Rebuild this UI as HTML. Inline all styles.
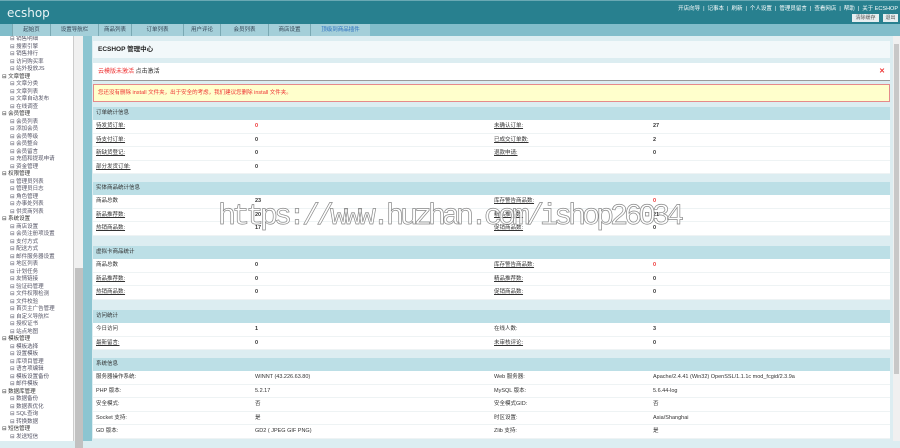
<!DOCTYPE html>
<html><head><meta charset="utf-8"><style>
*{margin:0;padding:0;box-sizing:border-box}
body{width:900px;height:441px;overflow:hidden;position:relative;background:#dcedf1;font-family:"Liberation Sans","Noto Sans CJK SC",sans-serif;font-size:6px;color:#333}
.top{position:absolute;left:0;top:0;width:900px;height:24px;background:#28808f;border-top:1px solid #6aa9b4}
.logo{position:absolute;left:7px;top:5px;color:#e8f4f6;font-size:12px;font-weight:normal;letter-spacing:0px;font-family:"DejaVu Sans",sans-serif}
.links{position:absolute;right:2px;top:3px;color:#fff;font-size:5.5px;white-space:nowrap}
.links span{margin:0 3px}
.btn{position:absolute;top:13px;height:8px;background:#e6eef0;color:#555;font-size:5px;line-height:8px;text-align:center}
.tabs{position:absolute;left:0;top:24px;width:900px;height:12px;background:#81bdca}
.tab{position:absolute;top:0;height:12px;background:#a4cfd9;border-left:1px solid #7aa9b3;font-size:5.5px;line-height:12px;text-align:center;color:#345}
.side{position:absolute;left:0;top:36px;width:73px;height:405px;background:#fff;overflow:hidden}
.side div{height:7.5px;line-height:7.5px;font-size:5.5px;white-space:nowrap;color:#556}
.side .g{padding-left:2px;color:#333}
.side .i{padding-left:10px}
.sb{position:absolute;left:73px;top:36px;width:10px;height:405px;background:#f0f0f0;border-left:1px solid #ccc}
.sb .th{position:absolute;left:1px;top:232px;width:8px;height:180px;background:#c1c1c1}
.div{position:absolute;left:83px;top:36px;width:9px;height:405px;background:#8cc5d1}
.rsb{position:absolute;left:893px;top:36px;width:7px;height:405px;background:#f0f0f0}
.rsb .th{position:absolute;left:1px;top:8px;width:5px;height:330px;background:#c8c8c8}
.panel{position:absolute;left:93px;width:797px}
.hd{background:#bcdfe6;height:13px;line-height:13px;padding-left:3px;font-size:5.5px;color:#333}
.row{background:#fff;height:13.6px;line-height:13.6px;position:relative;border-bottom:1px solid #eef3f4}
.row span{position:absolute;top:0;font-size:5.5px}
.c1{left:3px}.c2{left:162px;font-weight:bold}.c3{left:401px}.c4{left:560px;font-weight:bold}
.u{text-decoration:underline}
.r{color:#e33}
.n{font-weight:normal!important}
.wm{position:absolute;left:218px;top:200px;font-family:"Liberation Mono",monospace;font-size:30px;color:rgba(255,255,255,0.85);-webkit-text-stroke:0.7px #888;white-space:nowrap;letter-spacing:-4px}
</style></head><body>
<div class="top">
<div class="logo">ecshop</div>
<div class="links">开店向导<span>|</span>记事本<span>|</span>刷新<span>|</span>个人设置<span>|</span>管理员留言<span>|</span>查看网店<span>|</span>帮助<span>|</span>关于 ECSHOP</div>
<div class="btn" style="left:852px;width:27px">清除缓存</div>
<div class="btn" style="left:883px;width:15px">退出</div>
</div>
<div class="tabs">
<div class="tab" style="left:12px;width:38px">起始页</div>
<div class="tab" style="left:50px;width:48px">设置导航栏</div>
<div class="tab" style="left:98px;width:33px">商品列表</div>
<div class="tab" style="left:131px;width:52px">订单列表</div>
<div class="tab" style="left:183px;width:37px">用户评论</div>
<div class="tab" style="left:220px;width:48px">会员列表</div>
<div class="tab" style="left:268px;width:42px">商店设置</div>
<div class="tab" style="left:310px;width:60px;color:#2a6fc0">顶级到商品插件</div>
</div>
<div class="side">
<div class="i">⊟ 销售明细</div><div class="i">⊟ 搜索引擎</div><div class="i">⊟ 销售排行</div><div class="i">⊟ 访问购买率</div><div class="i">⊟ 站外投放JS</div>
<div class="g">⊟ 文章管理</div><div class="i">⊟ 文章分类</div><div class="i">⊟ 文章列表</div><div class="i">⊟ 文章自动发布</div><div class="i">⊟ 在线调查</div>
<div class="g">⊟ 会员管理</div><div class="i">⊟ 会员列表</div><div class="i">⊟ 添加会员</div><div class="i">⊟ 会员等级</div><div class="i">⊟ 会员整合</div><div class="i">⊟ 会员留言</div><div class="i">⊟ 充值和提现申请</div><div class="i">⊟ 资金管理</div>
<div class="g">⊟ 权限管理</div><div class="i">⊟ 管理员列表</div><div class="i">⊟ 管理员日志</div><div class="i">⊟ 角色管理</div><div class="i">⊟ 办事处列表</div><div class="i">⊟ 供货商列表</div>
<div class="g">⊟ 系统设置</div><div class="i">⊟ 商店设置</div><div class="i">⊟ 会员注册项设置</div><div class="i">⊟ 支付方式</div><div class="i">⊟ 配送方式</div><div class="i">⊟ 邮件服务器设置</div><div class="i">⊟ 地区列表</div><div class="i">⊟ 计划任务</div><div class="i">⊟ 友情链接</div><div class="i">⊟ 验证码管理</div><div class="i">⊟ 文件权限检测</div><div class="i">⊟ 文件校验</div><div class="i">⊟ 首页主广告管理</div><div class="i">⊟ 自定义导航栏</div><div class="i">⊟ 授权证书</div><div class="i">⊟ 站点地图</div>
<div class="g">⊟ 模板管理</div><div class="i">⊟ 模板选择</div><div class="i">⊟ 设置模板</div><div class="i">⊟ 库项目管理</div><div class="i">⊟ 语言项编辑</div><div class="i">⊟ 模板设置备份</div><div class="i">⊟ 邮件模板</div>
<div class="g">⊟ 数据库管理</div><div class="i">⊟ 数据备份</div><div class="i">⊟ 数据表优化</div><div class="i">⊟ SQL查询</div><div class="i">⊟ 转换数据</div>
<div class="g">⊟ 短信管理</div><div class="i">⊟ 发送短信</div>
</div>
<div class="sb"><div class="th"></div></div>
<div class="div"></div>
<div class="rsb"><div class="th"></div></div>

<div class="panel" style="top:41px;height:17px;background:#f2f8fa;line-height:17px;padding-left:5px;font-size:6.5px;font-weight:bold;color:#222">ECSHOP 管理中心</div>
<div class="panel" style="top:63px;height:18px;background:#fff;border-bottom:1px solid #999;line-height:18px;padding-left:5px;font-size:6px"><span style="color:#e33">云模版未激活</span> 点击激活<span style="position:absolute;right:5px;color:#e33;font-weight:bold;font-size:7px">✕</span></div>
<div class="panel" style="top:84px;height:18px;background:#ffffcc;border:1px solid #e58a8a;line-height:16px;padding-left:4px;font-size:5.5px;color:#e33">您还没有删除 install 文件夹，出于安全的考虑，我们建议您删除 install 文件夹。</div>

<div class="panel" style="top:107px">
<div class="hd">订单统计信息</div>
<div class="row"><span class="c1 u">待发货订单:</span><span class="c2 r">0</span><span class="c3 u">未确认订单:</span><span class="c4">27</span></div>
<div class="row"><span class="c1 u">待支付订单:</span><span class="c2">0</span><span class="c3 u">已成交订单数:</span><span class="c4">2</span></div>
<div class="row"><span class="c1 u">新缺货登记:</span><span class="c2">0</span><span class="c3 u">退款申请:</span><span class="c4">0</span></div>
<div class="row"><span class="c1 u">部分发货订单:</span><span class="c2">0</span></div>
</div>
<div class="panel" style="top:182px">
<div class="hd">实体商品统计信息</div>
<div class="row"><span class="c1">商品总数</span><span class="c2">23</span><span class="c3 u">库存警告商品数:</span><span class="c4 r">0</span></div>
<div class="row"><span class="c1 u">新品推荐数:</span><span class="c2">20</span><span class="c3 u">精品推荐数:</span><span class="c4">21</span></div>
<div class="row"><span class="c1 u">热销商品数:</span><span class="c2">17</span><span class="c3 u">促销商品数:</span><span class="c4">0</span></div>
</div>
<div class="panel" style="top:246px">
<div class="hd">虚拟卡商品统计</div>
<div class="row"><span class="c1">商品总数</span><span class="c2">0</span><span class="c3 u">库存警告商品数:</span><span class="c4 r">0</span></div>
<div class="row"><span class="c1 u">新品推荐数:</span><span class="c2">0</span><span class="c3 u">精品推荐数:</span><span class="c4">0</span></div>
<div class="row"><span class="c1 u">热销商品数:</span><span class="c2">0</span><span class="c3 u">促销商品数:</span><span class="c4">0</span></div>
</div>
<div class="panel" style="top:310px">
<div class="hd">访问统计</div>
<div class="row"><span class="c1">今日访问</span><span class="c2">1</span><span class="c3">在线人数:</span><span class="c4">3</span></div>
<div class="row"><span class="c1 u">最新留言:</span><span class="c2">0</span><span class="c3 u">未审核评论:</span><span class="c4">0</span></div>
</div>
<div class="panel" style="top:358px">
<div class="hd">系统信息</div>
<div class="row"><span class="c1">服务器操作系统:</span><span class="c2 n">WINNT (43.226.63.80)</span><span class="c3">Web 服务器:</span><span class="c4 n">Apache/2.4.41 (Win32) OpenSSL/1.1.1c mod_fcgid/2.3.9a</span></div>
<div class="row"><span class="c1">PHP 版本:</span><span class="c2 n">5.2.17</span><span class="c3">MySQL 版本:</span><span class="c4 n">5.6.44-log</span></div>
<div class="row"><span class="c1">安全模式:</span><span class="c2 n">否</span><span class="c3">安全模式GID:</span><span class="c4 n">否</span></div>
<div class="row"><span class="c1">Socket 支持:</span><span class="c2 n">是</span><span class="c3">时区设置:</span><span class="c4 n">Asia/Shanghai</span></div>
<div class="row"><span class="c1">GD 版本:</span><span class="c2 n">GD2 ( JPEG GIF PNG)</span><span class="c3">Zlib 支持:</span><span class="c4 n">是</span></div>
</div>
<div class="wm">https://www.huzhan.com/ishop26034</div>
</body></html>
